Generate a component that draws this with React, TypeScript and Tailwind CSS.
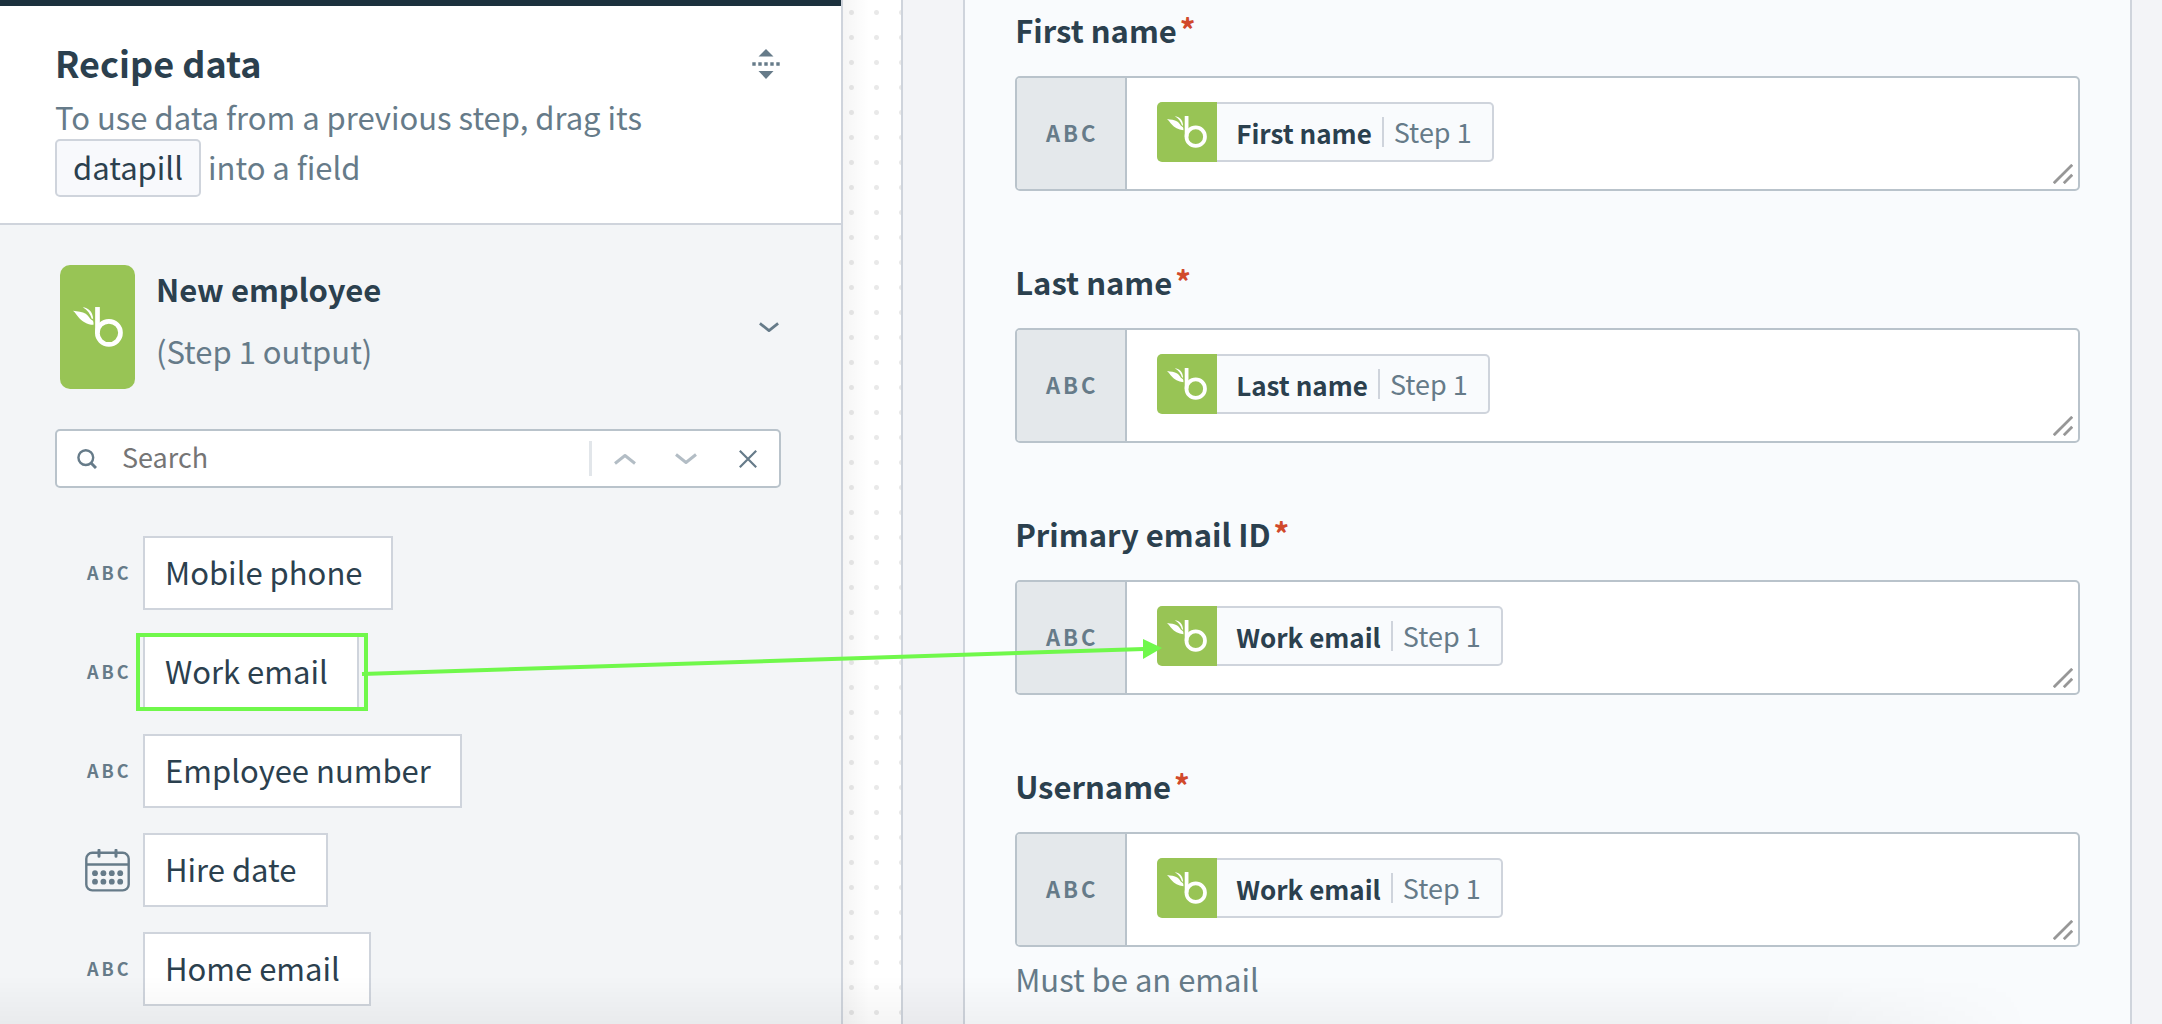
import { useState } from "react";

const FONT = "font-['Noto_Sans_CJK_SC','Noto_Sans',sans-serif]";

const datapills = [
  { label: "Mobile phone", type: "text" },
  { label: "Work email", type: "text", highlighted: true },
  { label: "Employee number", type: "text" },
  { label: "Hire date", type: "date" },
  { label: "Home email", type: "text" },
];

const fields = [
  { id: "first-name", label: "First name", pill: "First name" },
  { id: "last-name", label: "Last name", pill: "Last name" },
  { id: "primary-email", label: "Primary email ID", pill: "Work email" },
  { id: "username", label: "Username", pill: "Work email", hint: "Must be an email" },
];

function BambooLogo({ className }: { className: string }) {
  return (
    <svg viewBox="0 0 149 119" className={className} fill="#fff" aria-hidden="true">
      <path d="M66 0 H80 V77 H66 Z" />
      <circle cx="107" cy="77" r="34.5" stroke="#fff" strokeWidth="14" fill="none" />
      <path d="M0 11 C14 13 28 14 38 20 C47 26 50 36 56 39 C60 40 62 46 61 53 C42 52 27 43 17 31 C11 24 7 17 0 11 Z" />
      <path d="M29 1 C45 2 59 14 60 35 L56 35 C52 22 43 9 29 1 Z" />
    </svg>
  );
}

function Chevron({ up, className }: { up?: boolean; className: string }) {
  return (
    <svg viewBox="0 0 22 12" className={className} fill="none" stroke="currentColor" strokeWidth="3" aria-hidden="true">
      <path d={up ? "M1 10.5 L11 2.5 L21 10.5" : "M1 1.5 L11 9.5 L21 1.5"} strokeLinejoin="round" />
    </svg>
  );
}

function CalendarIcon() {
  return (
    <svg viewBox="0 0 45 43" className="h-[43px] w-[45px]" fill="none" stroke="#667b89" strokeWidth="2.4" aria-hidden="true">
      <rect x="1.3" y="3.8" width="42.4" height="37.6" rx="6" />
      <path d="M1 15.5 H44" />
      <path d="M14 1.2 V7.2 M31 1.2 V7.2" strokeWidth="3" strokeLinecap="round" />
      {[10, 18.4, 26.8, 35.2].map((x) => (
        <g key={x} fill="#667b89" stroke="none">
          <circle cx={x} cy="24.2" r="2.9" />
          <circle cx={x} cy="32.7" r="2.9" />
        </g>
      ))}
    </svg>
  );
}

function RecipeHeader() {
  return (
    <header className="flex items-start justify-between border-b-2 border-[#cfd4dc] bg-white pt-[30px] pr-[61px] pb-[26px] pl-[55px]">
      <div>
        <h2 className="text-[36px] leading-[52px] font-bold">Recipe data</h2>
        <p className="pt-[6px] text-[31px] leading-[45px] text-[#667b89]">
          To use data from a previous step, drag its
          <span className="flex items-center gap-[7px]">
            <span className="flex h-[58px] items-center rounded-[5px] border-2 border-[#cfd4dc] bg-[#f8f9fc] px-4 pb-1 text-[#2b404e]">
              datapill
            </span>
            <span className="pb-1">into a field</span>
          </span>
        </p>
      </div>
      <button aria-label="Collapse all" className="mt-[13px]">
        <svg viewBox="0 0 28 30" className="h-[30px] w-[28px]" fill="#667b89">
          <path d="M14 0 L21.5 7.5 H6.5 Z M14 30 L21.5 22 H6.5 Z" />
          <path d="M0.3 13.3 h3.4 v3.4 h-3.4 Z M6.3 13.3 h3.4 v3.4 h-3.4 Z M12.3 13.3 h3.4 v3.4 h-3.4 Z M18.3 13.3 h3.4 v3.4 h-3.4 Z M24.3 13.3 h3.4 v3.4 h-3.4 Z" />
        </svg>
      </button>
    </header>
  );
}

function SearchBar() {
  const [query, setQuery] = useState("");

  return (
    <div className="mt-10 flex h-[59px] items-center rounded-[5px] border-2 border-[#b9c3cb] bg-white pr-[22px] pl-5">
      <svg viewBox="0 0 20 20" className="size-5 shrink-0" fill="none" stroke="#667b89" strokeWidth="2.4" aria-hidden="true">
        <circle cx="8.8" cy="8.6" r="7.4" />
        <path d="M13.8 13.8 L19 19" strokeWidth="3" />
      </svg>
      <input
        type="text"
        aria-label="Search"
        placeholder="Search"
        value={query}
        onChange={(e) => setQuery(e.target.value)}
        className="ml-[25px] h-[50px] min-w-0 flex-1 pb-1 text-[27px] outline-none placeholder:text-[#757575]"
      />
      <span className="h-[35px] w-[3px] bg-[#e2e6ea]" />
      <button aria-label="Previous match" className="ml-[22px] text-[#b3bdc5]">
        <Chevron up className="h-3 w-[22px]" />
      </button>
      <button aria-label="Next match" className="ml-[39px] text-[#b3bdc5]">
        <Chevron className="h-3 w-[22px]" />
      </button>
      <button aria-label="Clear search" className="ml-[42px]" onClick={() => setQuery("")}>
        <svg viewBox="0 0 18 18" className="size-[18px]" stroke="#667b89" strokeWidth="2.2">
          <path d="M0.8 0.8 L17.2 17.2 M17.2 0.8 L0.8 17.2" />
        </svg>
      </button>
    </div>
  );
}

function DatapillList() {
  return (
    <ul className="mt-12 flex flex-col gap-[25px]">
      {datapills.map((pill) => (
        <li key={pill.label} className="flex items-center">
          <span className="flex w-[88px] shrink-0 pl-[30px]">
            {pill.type === "date" ? (
              <CalendarIcon />
            ) : (
              <span className="pb-[2px] pl-[2px] text-[18px] leading-[26px] font-bold tracking-[3px] text-[#667b89]">ABC</span>
            )}
          </span>
          <span className="relative flex h-[74px] items-center border-2 border-[#cfd4dc] bg-white pr-[29px] pb-[2px] pl-5 text-[31px]">
            {pill.label}
            {pill.highlighted && (
              <span className="absolute -inset-y-1 -right-[11px] -left-[9px] border-4 border-[#70f84b]" />
            )}
          </span>
        </li>
      ))}
    </ul>
  );
}

function Field({ id, label, pill, hint }: { id: string; label: string; pill: string; hint?: string }) {
  return (
    <div>
      <div id={id} className="flex gap-[3px] text-[31px] leading-[50px] font-bold">
        {label}
        <span className="leading-[48px] text-[#d1492b]">*</span>
      </div>
      <div className="mt-[21px] flex h-[115px] rounded-[5px] border-2 border-[#b9c3cb] bg-white">
        <div className="flex w-[110px] items-center justify-center rounded-l-[3px] border-r-2 border-[#b9c3cb] bg-[#e4e8eb] pb-[2px] pl-[2px] text-[22px] font-bold tracking-[3px] text-[#667b89]">
          ABC
        </div>
        <div
          role="textbox"
          aria-labelledby={id}
          tabIndex={0}
          className="flex flex-1 items-start justify-between pt-6 pr-[5px] pb-[5px] pl-[30px]"
        >
          <span className="flex h-[60px] items-stretch">
            <span className="flex w-[60px] items-center justify-center rounded-l-[5px] bg-[#98c455]">
              <BambooLogo className="h-8 w-10" />
            </span>
            <span className="flex items-center rounded-r-[5px] border-2 border-l-0 border-[#cfd4dc] bg-[#f9fbfd] pr-5 pl-[19px] text-[27px]">
              <span className="text-[26px] font-bold">{pill}</span>
              <span className="mx-[10px] h-[30px] w-[2px] bg-[#cfd4dc]" />
              <span className="text-[#667b89]">Step 1</span>
            </span>
          </span>
          <svg viewBox="0 0 20 20" className="size-5 self-end" stroke="#979797" strokeWidth="2.8" aria-hidden="true">
            <path d="M0.8 19.2 L19.2 0.8 M10.8 19.2 L19.2 10.8" />
          </svg>
        </div>
      </div>
      {hint && <p className="mt-[7px] text-[31px] leading-[50px] text-[#667b89]">{hint}</p>}
    </div>
  );
}

export default function App() {
  return (
    <div className={`relative flex min-h-screen overflow-hidden bg-[#f3f4f7] text-[#2b404e] ${FONT}`}>
      <aside className="w-[39%] shrink-0 border-r-2 border-[#cfd4dc] bg-[#f3f5f7]">
        <div className="h-[6px] bg-[#1c313d]" />
        <RecipeHeader />
        <section className="pt-10 pr-[60px] pl-[55px]">
          <div className="flex items-center pl-[5px]">
            <span className="flex h-[124px] w-[75px] items-center justify-center rounded-[10px] bg-[#98c455]">
              <BambooLogo className="h-10 w-[50px]" />
            </span>
            <div className="-mt-[14px] ml-[21px] flex-1 text-[31px] leading-[62px]">
              <h3 className="font-bold">New employee</h3>
              <p className="text-[#667b89]">(Step 1 output)</p>
            </div>
            <button aria-label="Toggle step output" className="mr-[2px] text-[#667b89]">
              <Chevron className="h-[11px] w-5" />
            </button>
          </div>
          <SearchBar />
          <DatapillList />
        </section>
      </aside>

      {/* canvas strip between the data tree and the step form */}
      <div className="w-[58px] shrink-0 bg-white bg-[linear-gradient(to_right,rgba(0,0,0,0.04),transparent_26px),radial-gradient(circle_at_center,#e9e9e9_2px,transparent_3px)] bg-[size:100%_100%,25px_25px] bg-[position:0_0,-4px_0]" />

      <main className="min-w-0 flex-1 border-l-2 border-[#cfd4dc] pr-[30px] pl-[60px]">
        <form className="flex h-full flex-col gap-[66px] border-x-2 border-[#cfd4dc] bg-[#f9fbfd] px-[50px] pt-[5px]">
          {fields.map((field) => (
            <Field key={field.id} {...field} />
          ))}
        </form>
      </main>

      {/* soft shadow along the bottom edge, fading out before the right side */}
      <div className="pointer-events-none absolute inset-x-0 bottom-0 h-12 bg-linear-to-b from-transparent to-black/4 mask-r-from-84% mask-r-to-94%" />

      <svg className="pointer-events-none absolute top-[630px] left-[362px] h-10 w-[802px] overflow-visible" aria-hidden="true">
        <path d="M0 44 L782 19" stroke="#70f84b" strokeWidth="4" />
        <path d="M781 9 L800 18 L781 29 Z" fill="#70f84b" />
      </svg>
    </div>
  );
}
